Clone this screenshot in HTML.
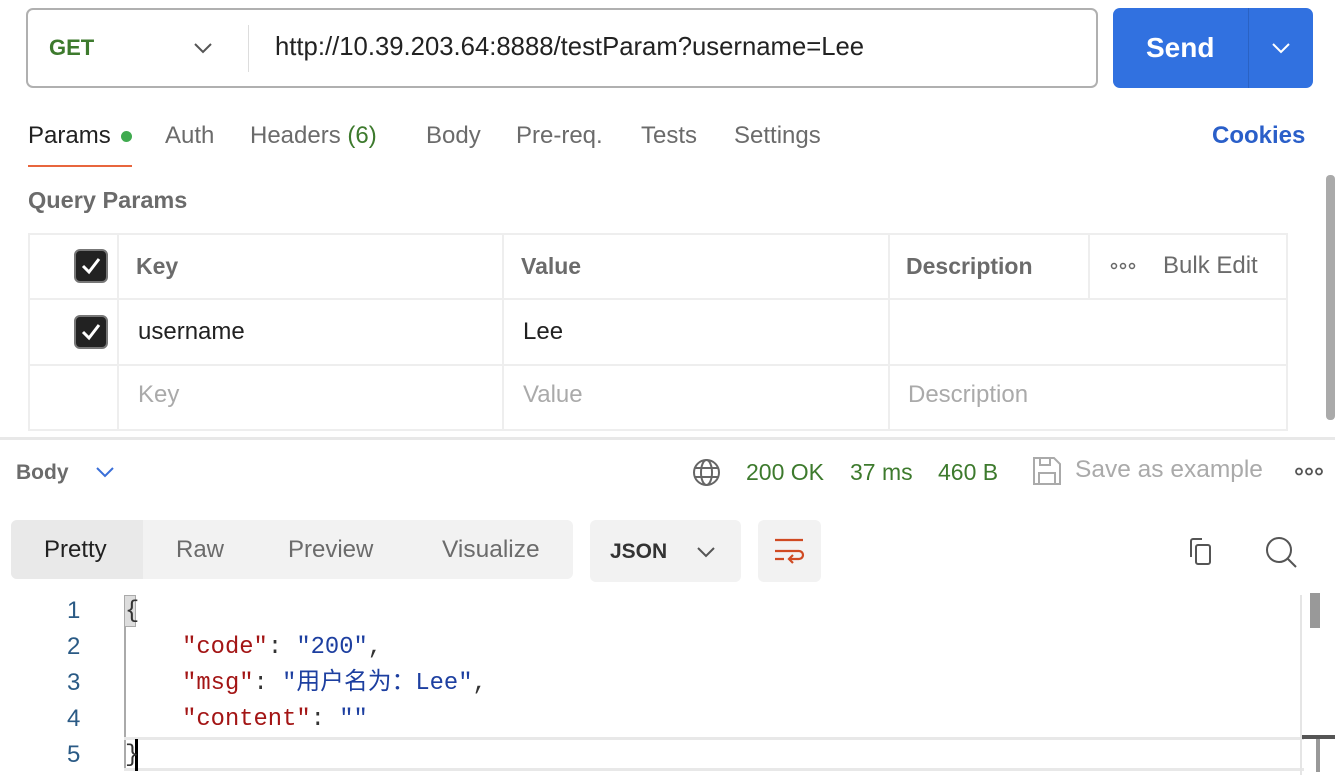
<!DOCTYPE html>
<html><head><meta charset="utf-8"><style>
*{margin:0;padding:0;box-sizing:border-box}
body{width:1335px;height:777px;background:#fff;position:relative;overflow:hidden;font-family:"Liberation Sans","Noto Sans CJK SC",sans-serif;font-size:24px;color:#212121}
.a{position:absolute;white-space:nowrap;line-height:1}
.mono{font-family:"Liberation Mono","Noto Sans CJK SC",monospace;font-size:23.8px}
.cb{position:absolute;width:34px;height:34px;background:#222;border:2px solid #777;border-radius:6px}
</style></head><body>
<!-- URL bar -->
<div class="a" style="left:26px;top:8px;width:1072px;height:80px;border:2px solid #b0b0b0;border-radius:7px"></div>
<div class="a" style="left:49px;top:37px;color:#3d7a2d;font-weight:bold;font-size:22px">GET</div>
<svg class="a" style="left:193px;top:42px" width="20" height="12"><path d="M2 2l8 8 8-8" stroke="#555" stroke-width="2" fill="none"/></svg>
<div class="a" style="left:248px;top:25px;width:1px;height:47px;background:#ddd"></div>
<div class="a" style="left:275px;top:35px;font-size:25.7px;color:#222">http://10.39.203.64:8888/testParam?username=Lee</div>
<div class="a" style="left:1113px;top:8px;width:200px;height:80px;background:#3171e0;border-radius:7px"></div>
<div class="a" style="left:1248px;top:8px;width:1px;height:80px;background:#2a62c4"></div>
<div class="a" style="left:1146px;top:34px;color:#fff;font-weight:bold;font-size:28px">Send</div>
<svg class="a" style="left:1271px;top:42px" width="20" height="12"><path d="M2 2l8 8 8-8" stroke="#fff" stroke-width="2" fill="none"/></svg>
<!-- tabs -->
<div class="a" style="left:28px;top:124px;color:#212121">Params</div>
<div class="a" style="left:121px;top:131px;width:11px;height:11px;border-radius:6px;background:#3faa4f"></div>
<div class="a" style="left:28px;top:165px;width:104px;height:2px;background:#e8663d"></div>
<div class="a" style="left:165px;top:124px;color:#6b6b6b">Auth</div>
<div class="a" style="left:250px;top:124px;color:#6b6b6b">Headers <span style="color:#3d7a2d">(6)</span></div>
<div class="a" style="left:426px;top:124px;color:#6b6b6b">Body</div>
<div class="a" style="left:516px;top:124px;color:#6b6b6b">Pre-req.</div>
<div class="a" style="left:641px;top:124px;color:#6b6b6b">Tests</div>
<div class="a" style="left:734px;top:124px;color:#6b6b6b">Settings</div>
<div class="a" style="left:1212px;top:124px;color:#2a5fc9;font-weight:bold">Cookies</div>
<div class="a" style="left:28px;top:189px;color:#6b6b6b;font-weight:bold;font-size:23.5px">Query Params</div>
<div class="a" style="left:1326px;top:175px;width:9px;height:245px;background:#aaa;border-radius:4px"></div>
<!-- table -->
<div class="a" style="left:28px;top:233px;width:1260px;height:198px;border:2px solid #eee"></div>
<div class="a" style="left:28px;top:298px;width:1260px;height:2px;background:#eee"></div>
<div class="a" style="left:28px;top:364px;width:1260px;height:2px;background:#eee"></div>
<div class="a" style="left:117px;top:233px;width:2px;height:198px;background:#eee"></div>
<div class="a" style="left:502px;top:233px;width:2px;height:198px;background:#eee"></div>
<div class="a" style="left:888px;top:233px;width:2px;height:198px;background:#eee"></div>
<div class="a" style="left:1088px;top:233px;width:2px;height:66px;background:#eee"></div>
<div class="cb" style="left:74px;top:249px"></div>
<svg class="a" style="left:80px;top:256px" width="22" height="20"><path d="M3 10l6 6L19 3" stroke="#fff" stroke-width="3" fill="none"/></svg>
<div class="cb" style="left:74px;top:315px"></div>
<svg class="a" style="left:80px;top:322px" width="22" height="20"><path d="M3 10l6 6L19 3" stroke="#fff" stroke-width="3" fill="none"/></svg>
<div class="a" style="left:136px;top:255px;color:#6b6b6b;font-weight:bold;font-size:23px">Key</div>
<div class="a" style="left:521px;top:255px;color:#6b6b6b;font-weight:bold;font-size:23px">Value</div>
<div class="a" style="left:906px;top:255px;color:#6b6b6b;font-weight:bold;font-size:23px">Description</div>
<svg class="a" style="left:1110px;top:262px" width="26" height="8"><g stroke="#666" stroke-width="1.5" fill="none"><circle cx="4" cy="4" r="2.5"/><circle cx="13" cy="4" r="2.5"/><circle cx="22" cy="4" r="2.5"/></g></svg>
<div class="a" style="left:1163px;top:254px;color:#6b6b6b">Bulk Edit</div>
<div class="a" style="left:138px;top:320px">username</div>
<div class="a" style="left:523px;top:320px">Lee</div>
<div class="a" style="left:138px;top:383px;color:#aaa">Key</div>
<div class="a" style="left:523px;top:383px;color:#aaa">Value</div>
<div class="a" style="left:908px;top:383px;color:#aaa">Description</div>
<!-- response -->
<div class="a" style="left:0;top:437px;width:1335px;height:3px;background:#e8e8e8"></div>
<div class="a" style="left:16px;top:462px;color:#6b6b6b;font-weight:bold;font-size:21px">Body</div>
<svg class="a" style="left:95px;top:466px" width="20" height="12"><path d="M2 2l8 8 8-8" stroke="#3a6fd8" stroke-width="2" fill="none"/></svg>
<svg class="a" style="left:692px;top:458px" width="29" height="29" viewBox="0 0 29 29"><g stroke="#666" stroke-width="2" fill="none"><circle cx="14.5" cy="14.5" r="12.5"/><ellipse cx="14.5" cy="14.5" rx="5.5" ry="12.5"/><path d="M3 10h23M3 19h23"/></g></svg>
<div class="a" style="left:746px;top:461px;color:#3d7a2d;font-size:23px">200 OK</div>
<div class="a" style="left:850px;top:461px;color:#3d7a2d;font-size:23px">37 ms</div>
<div class="a" style="left:938px;top:461px;color:#3d7a2d;font-size:23px">460 B</div>
<svg class="a" style="left:1032px;top:456px" width="30" height="30" viewBox="0 0 30 30"><g stroke="#aaa" stroke-width="2" fill="none"><path d="M2 2h20l6 6v20H2z"/><path d="M8 2v7h10V2M7 28V17h16v11"/></g></svg>
<div class="a" style="left:1075px;top:458px;color:#aaa;font-size:24.5px">Save as example</div>
<svg class="a" style="left:1295px;top:467px" width="28" height="9"><g stroke="#555" stroke-width="1.8" fill="none"><circle cx="4" cy="4.5" r="3"/><circle cx="14" cy="4.5" r="3"/><circle cx="24" cy="4.5" r="3"/></g></svg>
<div class="a" style="left:11px;top:520px;width:562px;height:59px;background:#f2f2f2;border-radius:6px"></div>
<div class="a" style="left:11px;top:520px;width:132px;height:59px;background:#e9e9e9;border-radius:6px 0 0 6px"></div>
<div class="a" style="left:44px;top:538px;color:#212121">Pretty</div>
<div class="a" style="left:176px;top:538px;color:#6b6b6b">Raw</div>
<div class="a" style="left:288px;top:538px;color:#6b6b6b">Preview</div>
<div class="a" style="left:442px;top:538px;color:#6b6b6b;font-size:24.5px">Visualize</div>
<div class="a" style="left:590px;top:520px;width:151px;height:62px;background:#f2f2f2;border-radius:6px"></div>
<div class="a" style="left:610px;top:541px;font-weight:bold;font-size:21px;color:#333">JSON</div>
<svg class="a" style="left:696px;top:546px" width="20" height="12"><path d="M2 2l8 8 8-8" stroke="#555" stroke-width="2" fill="none"/></svg>
<div class="a" style="left:758px;top:520px;width:63px;height:62px;background:#f2f2f2;border-radius:6px"></div>
<svg class="a" style="left:774px;top:537px" width="32" height="30" viewBox="0 0 32 30"><g stroke="#d04a22" stroke-width="2.2" fill="none"><path d="M1 3h28M1 14h24a4 4 0 0 1 0 8H16M1 22h9"/><path d="M19 18l-4 4 4 4"/></g></svg>
<svg class="a" style="left:1186px;top:537px" width="30" height="30" viewBox="0 0 30 30"><g stroke="#555" stroke-width="2" fill="none"><path d="M5 20V4a2 2 0 0 1 2-2h9"/><rect x="10" y="8" width="14" height="19" rx="2"/></g></svg>
<svg class="a" style="left:1264px;top:535px" width="34" height="34" viewBox="0 0 34 34"><g stroke="#555" stroke-width="2" fill="none"><circle cx="15" cy="15" r="12"/><path d="M24 24l8 8"/></g></svg>
<!-- code -->
<div class="a" style="left:124px;top:595px;width:2px;height:175px;background:#aaa"></div>
<div class="a" style="left:124px;top:737px;width:1180px;height:34px;border-top:3px solid #e8e8e8;border-bottom:3px solid #e8e8e8"></div>
<div class="a" style="left:1300px;top:595px;width:2px;height:180px;background:#e5e5e5"></div>
<div class="a" style="left:1310px;top:593px;width:10px;height:35px;background:#999"></div>
<div class="a" style="left:1302px;top:735px;width:33px;height:4px;background:#555"></div>
<div class="a" style="left:1316px;top:739px;width:4px;height:33px;background:#999"></div>
<div class="a" style="left:124px;top:595px;width:12px;height:32px;background:#ddd;border:1px solid #aaa"></div>
<div class="a" style="left:135px;top:739px;width:3px;height:32px;background:#000"></div>
<div class="a" style="left:67px;top:593px;color:#2a5a85;font-size:24px;line-height:36px">1<br>2<br>3<br>4<br>5</div>
<div class="a mono" style="left:125px;top:594px;line-height:36px;color:#333">{<br>&nbsp;&nbsp;&nbsp;&nbsp;<span style="color:#a31515">"code"</span>: <span style="color:#1d3fa0">"200"</span>,<br>&nbsp;&nbsp;&nbsp;&nbsp;<span style="color:#a31515">"msg"</span>: <span style="color:#1d3fa0">"用户名为：Lee"</span>,<br>&nbsp;&nbsp;&nbsp;&nbsp;<span style="color:#a31515">"content"</span>: <span style="color:#1d3fa0">""</span><br>}</div>
</body></html>
